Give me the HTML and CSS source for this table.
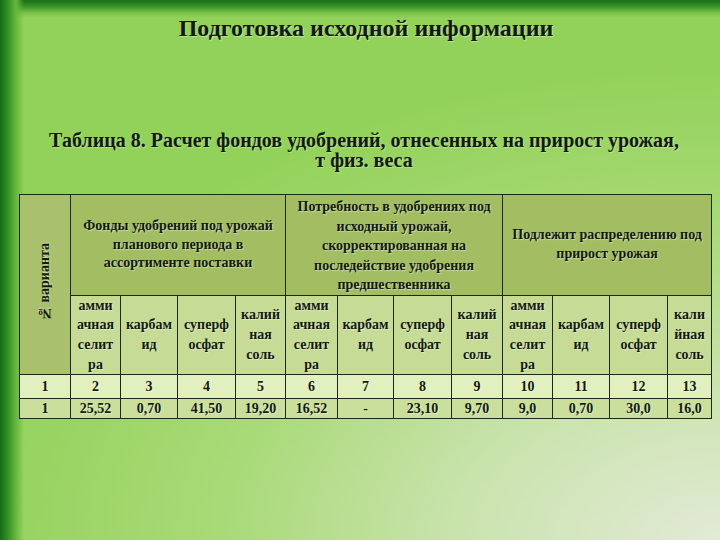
FILE: index.html
```html
<!DOCTYPE html>
<html lang="ru">
<head>
<meta charset="utf-8">
<link rel="stylesheet" href="styles.css">
</head>
<body>
<div class="slide">
  <h1 class="title">Подготовка исходной информации</h1>
  <p class="caption">Таблица 8. Расчет фондов удобрений, отнесенных на прирост урожая,<br>т физ. веса</p>
  <table class="grid">
    <colgroup>
      <col class="w51"><col class="w50"><col class="w57"><col class="w58"><col class="w50">
      <col class="w52"><col class="w56"><col class="w58"><col class="w51">
      <col class="w50"><col class="w57"><col class="w58"><col class="w44">
    </colgroup>
    <tr class="h1row">
      <th rowspan="2" class="num-head"><span class="vert">№ варианта</span></th>
      <th colspan="4" class="group">Фонды удобрений под урожай<br>планового периода в<br>ассортименте поставки</th>
      <th colspan="4" class="group top">Потребность в удобрениях под<br>исходный урожай,<br>скорректированная на<br>последействие удобрения<br>предшественника</th>
      <th colspan="4" class="group">Подлежит распределению под<br>прирост урожая</th>
    </tr>
    <tr class="h2row">
      <th>амми<br>ачная<br>селит<br>ра</th>
      <th>карбам<br>ид</th>
      <th>суперф<br>осфат</th>
      <th>калий<br>ная<br>соль</th>
      <th>амми<br>ачная<br>селит<br>ра</th>
      <th>карбам<br>ид</th>
      <th>суперф<br>осфат</th>
      <th>калий<br>ная<br>соль</th>
      <th>амми<br>ачная<br>селит<br>ра</th>
      <th>карбам<br>ид</th>
      <th>суперф<br>осфат</th>
      <th>кали<br>йная<br>соль</th>
    </tr>
    <tr class="idx">
      <td>1</td><td>2</td><td>3</td><td>4</td><td>5</td><td>6</td><td>7</td><td>8</td><td>9</td><td>10</td><td>11</td><td>12</td><td>13</td>
    </tr>
    <tr class="vals">
      <td>1</td><td>25,52</td><td>0,70</td><td>41,50</td><td>19,20</td><td>16,52</td><td>-</td><td>23,10</td><td>9,70</td><td>9,0</td><td>0,70</td><td>30,0</td><td>16,0</td>
    </tr>
  </table>
</div>
</body>
</html>
```

FILE: styles.css
```css
html, body {
  margin: 0;
  padding: 0;
}

body {
  width: 720px;
  height: 540px;
  overflow: hidden;
  font-family: "Liberation Serif", "Times New Roman", serif;
  color: #141a0c;
}

.slide {
  position: relative;
  width: 720px;
  height: 540px;
  box-sizing: border-box;
  padding-top: 14px;
  background:
    linear-gradient(to right, #146b17 0px, #2a8722 6px, #66b83b 16px, rgba(144, 207, 85, 0) 24px),
    linear-gradient(to bottom, #186f17 0px, #379026 6px, #79c347 13px, rgba(144, 207, 85, 0) 18px),
    radial-gradient(ellipse 760px 470px at 100% 100%, #e2ead6 0%, #c9e3ac 35%, #a9da78 65%, rgba(148, 210, 90, 0) 100%),
    #93d25a;
}

.title {
  margin: 0;
  padding-left: 12px;
  font-family: "Liberation Serif", "Times New Roman", serif;
  font-size: 24px;
  line-height: 28px;
  font-weight: bold;
  text-align: center;
  text-shadow: 1px 1px 1px rgba(255, 255, 255, 0.45);
}

.caption {
  margin: 88px 0 0;
  padding-left: 8px;
  font-family: "Liberation Serif", "Times New Roman", serif;
  font-size: 20px;
  line-height: 20px;
  font-weight: bold;
  text-align: center;
  text-shadow: 1px 1px 1px rgba(255, 255, 255, 0.35);
}

.grid {
  margin: 24px 0 0 19px;
  width: 693px;
  table-layout: fixed;
  border-collapse: collapse;
  font-family: "Liberation Serif", "Times New Roman", serif;
  font-size: 14px;
  font-weight: bold;
  text-shadow: 1px 1px 1px rgba(255, 255, 255, 0.45);
}

.w44 { width: 44px; }
.w50 { width: 50px; }
.w51 { width: 51px; }
.w52 { width: 52px; }
.w56 { width: 56px; }
.w57 { width: 57px; }
.w58 { width: 58px; }

.grid th,
.grid td {
  border: 1px solid #1c2a12;
  padding: 0;
  text-align: center;
  vertical-align: middle;
  font-family: "Liberation Serif", "Times New Roman", serif;
  font-weight: bold;
  overflow: hidden;
}

.h1row {
  height: 98px;
}

.h1row th {
  background: #a3bd63;
  line-height: 18.5px;
}

.h1row th.top {
  vertical-align: top;
  line-height: 19.5px;
  padding-top: 2px;
}

.num-head {
  background: #a9c16c !important;
}

.vert {
  display: inline-block;
  writing-mode: vertical-rl;
  transform: rotate(180deg);
  white-space: nowrap;
}

.h2row {
  height: 77px;
}

.h2row th {
  background: #c5db96;
  line-height: 19.7px;
}

.idx {
  height: 24px;
}

.idx td {
  background: #e2f0bf;
}

.vals {
  height: 20px;
}

.vals td {
  background: #c9df9b;
  line-height: 18px;
}
```
